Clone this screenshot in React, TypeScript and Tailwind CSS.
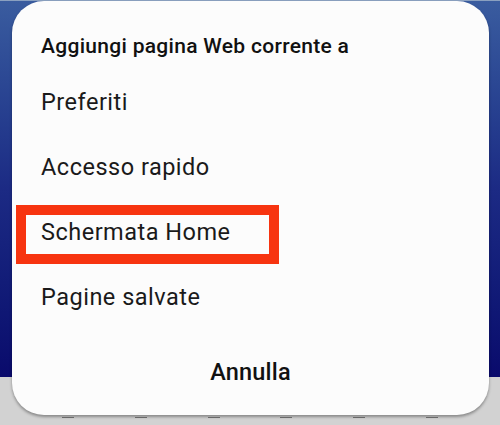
const options = ["Preferiti", "Accesso rapido", "Schermata Home", "Pagine salvate"];

export default function App() {
  return (
    <div
      className="relative w-[500px] h-[425px] overflow-hidden flex flex-col"
      style={{ fontFamily: "Roboto, 'Noto Sans', sans-serif" }}
    >
      {/* page behind the dialog */}
      <div className="h-[377px] bg-gradient-to-b from-[#3a5c9f] via-[#1c2a84] to-[#0a0a6c] border-t border-[#8aa0c0]" />
      <div className="flex-1 bg-[#d2d2d2] flex justify-around px-8 pt-[40px]">
        {[0, 1, 2, 3, 4, 5].map((i) => (
          <div key={i} className="w-3 h-[1px] bg-[#777]" />
        ))}
      </div>

      {/* dialog */}
      <div className="absolute left-[12px] top-[1px] w-[477px] h-[414px] bg-[#fcfcfc] rounded-[32px] shadow-[0_2px_3px_rgba(0,0,0,0.35)] flex flex-col">
        <div className="pt-[35px] pl-[29px] h-[69px]">
          <h2 className="text-[21px] leading-[20px] tracking-[0.3px] font-medium text-[#111]">
            Aggiungi pagina Web corrente a
          </h2>
        </div>
        {options.map((label) => (
          <div key={label} className="relative h-[65px] flex items-center pl-[29px]">
            <span className="text-[23.5px] leading-[23px] tracking-[0.5px] text-[#1a1a1a]">{label}</span>
            {label === "Schermata Home" && (
              <div className="absolute left-[4px] top-[5px] w-[263px] h-[59px] border-[10px] border-[#f73410]" />
            )}
          </div>
        ))}
        <div className="mt-[31px] text-center">
          <button className="text-[23.5px] leading-[23px] tracking-[0.2px] font-medium text-[#111]">Annulla</button>
        </div>
      </div>
    </div>
  );
}
